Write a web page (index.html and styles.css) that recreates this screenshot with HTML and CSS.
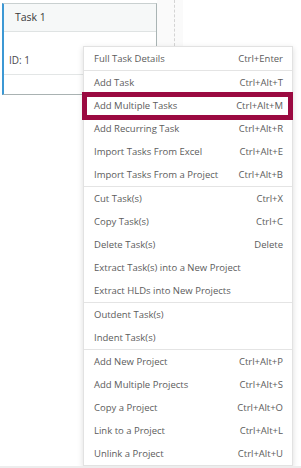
FILE: index.html
```html
<!DOCTYPE html>
<html>
<head>
<meta charset="utf-8">
<link rel="stylesheet" href="styles.css">
</head>
<body>
<div class="page">
  <div class="lane-fill"></div>
  <div class="lane-divider"></div>
  <div class="board">
    <div class="card">
      <div class="card-header">Task 1</div>
      <div class="card-row card-id">ID: 1</div>
      <div class="card-row card-empty"></div>
    </div>
  </div>

  <ul class="menu">
    <li class="item"><span>Full Task Details</span><span class="key">Ctrl+Enter</span></li>
    <li class="sep"></li>
    <li class="item"><span>Add Task</span><span class="key">Ctrl+Alt+T</span></li>
    <li class="item focus"><span>Add Multiple Tasks</span><span class="key">Ctrl+Alt+M</span></li>
    <li class="item"><span>Add Recurring Task</span><span class="key">Ctrl+Alt+R</span></li>
    <li class="item"><span>Import Tasks From Excel</span><span class="key">Ctrl+Alt+E</span></li>
    <li class="item"><span>Import Tasks From a Project</span><span class="key">Ctrl+Alt+B</span></li>
    <li class="sep"></li>
    <li class="item"><span>Cut Task(s)</span><span class="key">Ctrl+X</span></li>
    <li class="item"><span>Copy Task(s)</span><span class="key">Ctrl+C</span></li>
    <li class="item"><span>Delete Task(s)</span><span class="key">Delete</span></li>
    <li class="item"><span>Extract Task(s) into a New Project</span></li>
    <li class="item"><span>Extract HLDs into New Projects</span></li>
    <li class="sep"></li>
    <li class="item"><span>Outdent Task(s)</span></li>
    <li class="item"><span>Indent Task(s)</span></li>
    <li class="sep"></li>
    <li class="item"><span>Add New Project</span><span class="key">Ctrl+Alt+P</span></li>
    <li class="item"><span>Add Multiple Projects</span><span class="key">Ctrl+Alt+S</span></li>
    <li class="item"><span>Copy a Project</span><span class="key">Ctrl+Alt+O</span></li>
    <li class="item"><span>Link to a Project</span><span class="key">Ctrl+Alt+L</span></li>
    <li class="item"><span>Unlink a Project</span><span class="key">Ctrl+Alt+U</span></li>
  </ul>
  <div class="bottom-bar"></div>
</div>
</body>
</html>
```
FILE: styles.css
```css
* { box-sizing: border-box; }
html, body {
  margin: 0;
  padding: 0;
  background: #ffffff;
}
body {
  font-family: "Open Sans", "Liberation Sans", sans-serif;
  color: #444;
}
.page {
  position: relative;
  width: 301px;
  height: 468px;
  overflow: hidden;
}
.lane-fill {
  position: absolute;
  left: 157px;
  top: 0;
  width: 26px;
  height: 46px;
  background: #fafafa;
}
.lane-divider {
  position: absolute;
  left: 174px;
  top: 0;
  height: 46px;
  border-left: 1px dashed #d4d4d4;
}
.board {
  padding: 3px 0 0 2px;
}
.card {
  position: relative;
  width: 155px;
  background: #fff;
  border: 1px solid #c9d0d0;
  border-left: 2px solid #3c98d4;
  border-bottom-color: #a9b2b2;
  border-right-color: #a9b4b4;
}
.card-header {
  height: 28px;
  padding-left: 11px;
  background: #f6f8f8;
  border-bottom: 1px solid #dfe3e3;
  font-size: 10.5px;
  line-height: 27px;
  color: #3a3a3a;
}
.card-row {
  border-bottom: 1px solid #e3e6e6;
  font-size: 10px;
  color: #4a4a4a;
  padding-left: 5px;
}
.card-id {
  height: 43px;
  padding-top: 21px;
  line-height: 14px;
}
.card-empty {
  height: 19px;
  border-bottom: none;
}
.menu {
  position: absolute;
  left: 83px;
  top: 46px;
  width: 210px;
  margin: 0;
  padding: 0;
  list-style: none;
  background: #fff;
  border: 1px solid #e2e2e2;
  box-shadow: 0 2px 6px rgba(0, 0, 0, 0.14);
}
.item {
  position: relative;
  height: 23px;
  display: flex;
  align-items: center;
  justify-content: space-between;
  padding: 0 9px 0 10px;
  font-size: 9.5px;
  color: #5c5c5c;
  white-space: nowrap;
}
.key {
  color: #5c5c5c;
}
.sep {
  height: 1px;
  background: #e4e4e4;
}
.focus::after {
  content: "";
  position: absolute;
  left: -2px;
  right: -1px;
  top: -2px;
  bottom: -3px;
  border: 5px solid #9b0a41;
}
.bottom-bar {
  position: absolute;
  left: 0;
  right: 0;
  bottom: 0;
  height: 2px;
  background: #ededed;
}
```
